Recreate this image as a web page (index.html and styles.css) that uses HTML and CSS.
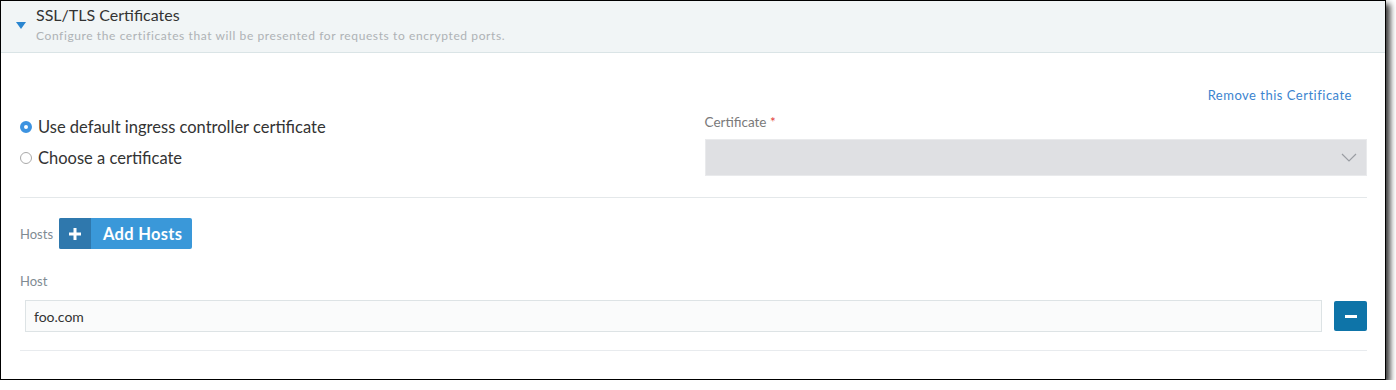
FILE: index.html
```html
<!DOCTYPE html>
<html lang="en">
<head>
    <meta charset="UTF-8">
    <title>SSL/TLS Certificates</title>
    <link rel="stylesheet" href="styles.css">
</head>
<body>
    <div class="panel">
        <div class="panel-header">
            <div class="caret"></div>
            <div class="header-text">
                <div class="header-title">SSL/TLS Certificates</div>
                <div class="header-desc">Configure the certificates that will be presented for requests to encrypted ports.</div>
            </div>
        </div>

        <div class="panel-body">
            <div class="remove-row">
                <a class="remove-link" href="#">Remove this Certificate</a>
            </div>

            <div class="cert-row">
                <div class="radio-group">
                    <label class="radio-option">
                        <span class="radio checked"></span>
                        Use default ingress controller certificate
                    </label>
                    <label class="radio-option">
                        <span class="radio"></span>
                        Choose a certificate
                    </label>
                </div>
                <div class="cert-field">
                    <div class="field-label">Certificate <span class="required">*</span></div>
                    <div class="select-box">
                        <svg class="chevron" width="16" height="10" viewBox="0 0 16 10">
                            <path d="M1 1 L8 8 L15 1" fill="none" stroke="#9a9da3" stroke-width="1.2"/>
                        </svg>
                    </div>
                </div>
            </div>

            <div class="divider"></div>

            <div class="hosts-row">
                <span class="hosts-label">Hosts</span>
                <button class="add-btn">
                    <span class="add-icon">
                        <svg width="12" height="12" viewBox="0 0 12 12">
                            <rect x="4.5" y="0" width="3" height="12" fill="#fff"/>
                            <rect x="0" y="4.5" width="12" height="3" fill="#fff"/>
                        </svg>
                    </span>
                    <span class="add-text">Add Hosts</span>
                </button>
            </div>

            <div class="host-label">Host</div>
            <div class="host-row">
                <div class="host-input">foo.com</div>
                <button class="remove-btn"><span class="minus"></span></button>
            </div>

            <div class="divider bottom"></div>
        </div>
    </div>
</body>
</html>
```

FILE: styles.css
```css
body {
    margin: 0;
    background: #fff;
    font-family: 'Lato', sans-serif;
}

.panel {
    width: 1386px;
    height: 380px;
    box-sizing: border-box;
    border: 1px solid #000;
    background: #fff;
    box-shadow: 4px 4px 6px rgba(0, 0, 0, 0.8);
}

.panel-header {
    display: flex;
    height: 51px;
    background: #f1f5f6;
    border-bottom: 1px solid #dae4e6;
}

.caret {
    width: 0;
    height: 0;
    margin: 21px 0 0 15px;
    border-left: 5px solid transparent;
    border-right: 5px solid transparent;
    border-top: 7px solid #2a86d0;
}

.header-text {
    margin-left: 10px;
    padding-top: 4px;
}

.header-title {
    font-size: 16px;
    line-height: 20px;
    color: #333;
}

.header-desc {
    margin-top: 3px;
    font-size: 12px;
    line-height: 16px;
    letter-spacing: 0.6px;
    color: #aeb2b5;
}

.panel-body {
    padding: 0 18px 0 19px;
}

.remove-row {
    margin-top: 33px;
    padding-right: 15px;
    text-align: right;
    line-height: 16px;
}

.remove-link {
    font-size: 13px;
    letter-spacing: 0.5px;
    color: #3b84cf;
    text-decoration: none;
}

.cert-row {
    display: grid;
    grid-template-columns: 1fr 1fr;
    column-gap: 22px;
    margin-top: 11px;
}

.radio-group {
    padding-top: 3px;
}

.radio-option {
    display: flex;
    align-items: center;
    height: 20px;
    font-size: 16.5px;
    color: #333;
}

.radio-option + .radio-option {
    margin-top: 11px;
}

.radio {
    width: 12px;
    height: 12px;
    box-sizing: border-box;
    border: 1px solid #aaa;
    border-radius: 50%;
    margin-right: 6px;
    background: #fff;
}

.radio.checked {
    border: 4px solid #3d93e0;
}

.field-label {
    font-size: 13.5px;
    line-height: 16px;
    color: #7a7a7a;
}

.required {
    color: #e23b3b;
}

.select-box {
    display: flex;
    align-items: center;
    justify-content: flex-end;
    margin-top: 9px;
    height: 37px;
    box-sizing: border-box;
    background: #dfe0e3;
    border: 1px solid #e9eaec;
    padding-right: 9px;
}

.divider {
    height: 1px;
    background: #e4e8ea;
    margin-top: 21px;
}

.hosts-row {
    display: flex;
    align-items: center;
    margin-top: 20px;
}

.hosts-label {
    font-size: 13px;
    color: #7f8b93;
    margin-right: 6px;
}

.add-btn {
    display: flex;
    height: 31px;
    padding: 0;
    border: none;
    border-radius: 2px;
    overflow: hidden;
    background: #3a98d9;
    font-family: 'Lato', sans-serif;
    cursor: pointer;
}

.add-icon {
    display: flex;
    align-items: center;
    justify-content: center;
    width: 32px;
    background: #2f78ad;
}

.add-text {
    display: flex;
    align-items: center;
    padding: 0 10px 0 12px;
    font-size: 16.5px;
    letter-spacing: 0.3px;
    font-weight: bold;
    color: #fff;
}

.host-label {
    margin-top: 24px;
    font-size: 13px;
    line-height: 16px;
    color: #7f8b93;
}

.host-row {
    display: flex;
    align-items: center;
    margin-top: 11px;
}

.host-input {
    flex: 1;
    height: 32px;
    box-sizing: border-box;
    margin-left: 5px;
    padding-left: 8px;
    display: flex;
    align-items: center;
    background: #fafbfb;
    border: 1px solid #dde3e5;
    font-size: 14px;
    color: #333;
}

.remove-btn {
    width: 33px;
    height: 30px;
    margin-left: 12px;
    border: none;
    border-radius: 2px;
    background: #0e74a8;
    display: flex;
    align-items: center;
    justify-content: center;
    padding: 0;
}

.minus {
    width: 12px;
    height: 3px;
    background: #fff;
}

.divider.bottom {
    margin-top: 18px;
    background: #e8ebee;
}
```
